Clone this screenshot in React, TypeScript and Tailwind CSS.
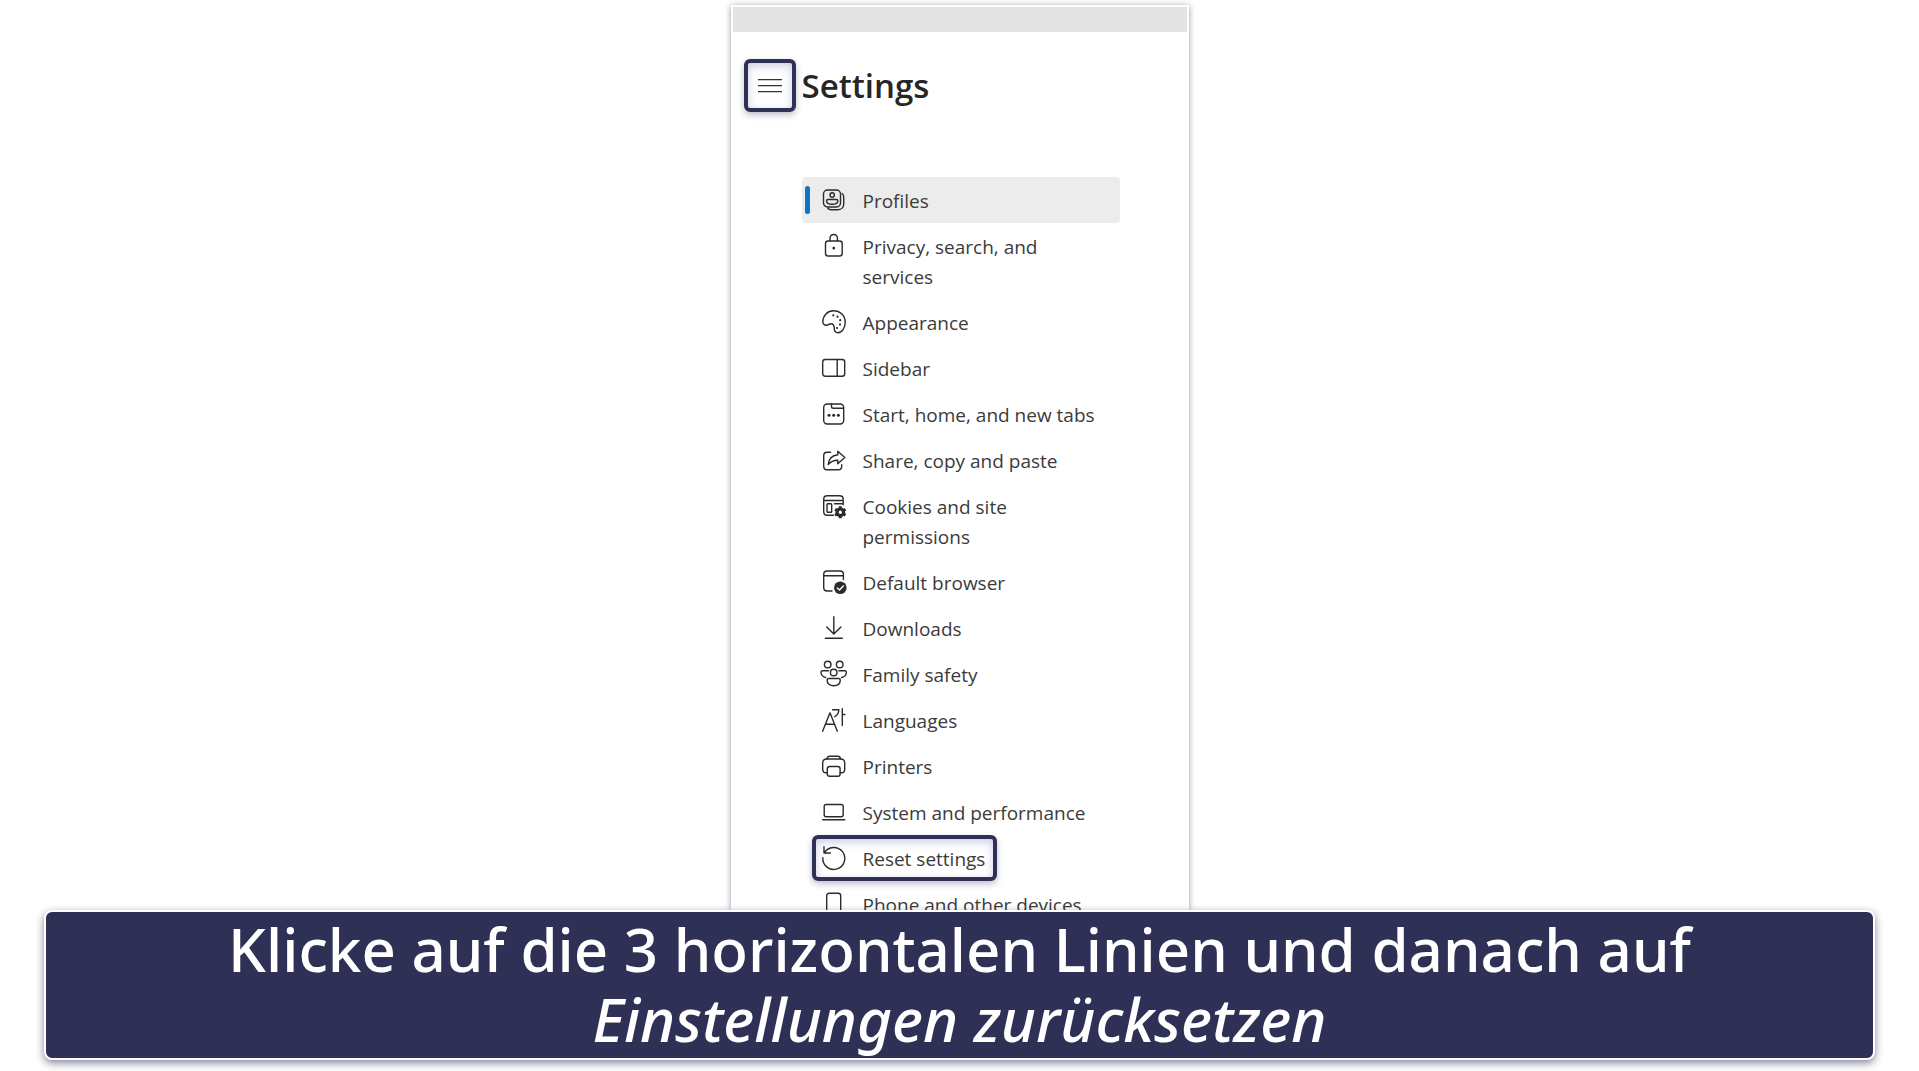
import React from 'react';

const ICONS = {
  profiles: (
    <>
      <rect x="1.5" y="2" width="17" height="17" rx="4" />
      <path d="M20.2 5.5c1 .8 1.5 1.8 1.5 3.2v7.3c0 3.3-2.4 5.7-5.7 5.7H9c-1.4 0-2.4-.5-3.2-1.5" />
      <circle cx="10.2" cy="7" r="2.2" />
      <path d="M5.8 11.5h8.8c.8 0 1.2.5 1.2 1.2 0 2.2-2.2 3.6-5.6 3.6s-5.6-1.4-5.6-3.6c0-.7.4-1.2 1.2-1.2z" />
    </>
  ),
  lock: (
    <>
      <rect x="3.5" y="7" width="16.7" height="15" rx="2.5" />
      <path d="M8 7V4.2a3.7 3.7 0 0 1 7.4 0V7" />
      <circle cx="11.8" cy="14.2" r=".7" fill="currentColor" />
    </>
  ),
  palette: (
    <>
      <path d="M.8 11.5C1 5.5 5.5.8 11.5.8c6.6 0 11.7 5 11.7 11.2 0 6-3.2 10.7-7.2 10.7-2.4 0-3.7-1.6-3.7-4.2 0-2.8-.8-4.8-3.3-4.8-1.800 0-2.5 1.5-4.5 1.5C2.2 15.2.7 13.8.8 11.5z" />
      <g fill="currentColor" stroke="none">
        <circle cx="11.3" cy="5.3" r="1.1" />
        <circle cx="15.5" cy="6.7" r="1.1" />
        <circle cx="18.2" cy="10.2" r="1.1" />
        <circle cx="18" cy="14.6" r="1.1" />
        <circle cx="15" cy="18" r="1.1" />
      </g>
    </>
  ),
  sidebar: (
    <>
      <rect x=".7" y="3.5" width="22" height="16.7" rx="2.5" />
      <path d="M15.2 3.5v16.7" />
    </>
  ),
  tabs: (
    <>
      <rect x="1.7" y="2" width="20" height="20" rx="3.5" />
      <path d="M9.5 2v2.5c0 1 .8 1.8 1.8 1.8h10" />
      <g fill="currentColor" stroke="none">
        <circle cx="7" cy="13.3" r="1.5" />
        <circle cx="11.7" cy="13.3" r="1.5" />
        <circle cx="16.4" cy="13.3" r="1.5" />
      </g>
    </>
  ),
  share: (
    <>
      <path d="M8.5 4.3H5.2c-2 0-3.5 1.5-3.5 3.5v10.5c0 2 1.5 3.5 3.5 3.5h11c2 0 3.5-1.5 3.5-3.5v-1.5" />
      <path d="M15.8 3.3l7 6.3-7 6.2v-3.5c-4.2-.2-6.8 1.2-9.6 4.3.5-5.5 3.6-9.2 9.6-9.800z" />
    </>
  ),
  cookies: (
    <>
      <path d="M11.5 21.2H5.2c-2 0-3.5-1.5-3.5-3.5V5.2c0-2 1.5-3.5 3.5-3.5h12.5c2 0 3.5 1.5 3.5 3.5v5.6M1.7 6.5h19.5" />
      <rect x="5" y="9.8" width="4.7" height="8.4" rx=".8" />
      <path d="M12.5 9.8h8" />
      <circle cx="18.3" cy="18.3" r="3.3" strokeWidth="3.2" />
      <path d="M18.3 12.3v2M18.3 22.3v2M13.1 15.3l1.7 1M21.8 20.3l1.7 1M13.1 21.3l1.7-1M21.8 16.3l1.7-1" strokeWidth="3" strokeLinecap="butt" />
    </>
  ),
  browser: (
    <>
      <path d="M10 21H5.2c-2 0-3.5-1.5-3.5-3.5v-13c0-2 1.5-3.5 3.5-3.5h12.7c2 0 3.5 1.5 3.5 3.5v5M1.7 5.8h19.7" />
      <circle cx="18.3" cy="17.7" r="6.3" fill="currentColor" stroke="none" />
      <path d="M15.3 18l2.2 2 3.8-4" stroke="#fff" />
    </>
  ),
  download: <path d="M11.8.7v17M4.7 11l7.1 7 7.1-7M3.3 22.3h17" />,
  family: (
    <>
      <circle cx="5.7" cy="2.5" r="3.3" />
      <circle cx="17.7" cy="2.5" r="3.3" />
      <circle cx="11.7" cy="10.5" r="3.3" />
      <path d="M6.5 8.8H.7c-1 0-1.7.6-1.7 1.5 0 2.7 1.8 4.6 4.7 5.2M16.9 8.8h5.8c1 0 1.7.6 1.7 1.5 0 2.7-1.8 4.6-4.7 5.2" />
      <path d="M6.8 16.5h9.8c1 0 1.7.6 1.7 1.5 0 3.5-2.6 5.8-6.6 5.8S5.1 21.5 5.1 18c0-.9.7-1.5 1.7-1.5z" />
    </>
  ),
  languages: (
    <>
      <path d="M.6 23.3L8 4.8l7.3 18.5M3.5 16.3h9" />
      <path d="M10.5 1.7h6.3c0 3.2-1.3 5.3-4 7M20.3.6v17M20.3 6.5h2.6" />
    </>
  ),
  printer: (
    <>
      <path d="M5.3 18.8H4c-2 0-3.3-1.3-3.3-3.3V9c0-2.4 1.6-4 4-4h14c2.4 0 4 1.6 4 4v6.5c0 2-1.3 3.3-3.3 3.3h-1.3" />
      <path d="M5 5c0-1.6 1-2.7 2.7-2.7h8c1.7 0 2.7 1.1 2.7 2.7" />
      <rect x="5.3" y="12.5" width="12.8" height="9.7" rx="2.2" />
    </>
  ),
  system: (
    <>
      <rect x="2.2" y="4.5" width="19" height="12.3" rx="2" />
      <path d="M.7 19.8h22" />
    </>
  ),
  reset: <path d="M2 .8v6.2h6.4M2.4 6.7A11 11 0 1 1 .8 11.8" />,
  phone: <rect x="4.7" y="1.3" width="14" height="22" rx="2.5" />,
};

type IconName = keyof typeof ICONS;

const ITEMS: { icon: IconName; label: string; active?: boolean; marked?: boolean }[] = [
  { icon: 'profiles', label: 'Profiles', active: true },
  { icon: 'lock', label: 'Privacy, search, and services' },
  { icon: 'palette', label: 'Appearance' },
  { icon: 'sidebar', label: 'Sidebar' },
  { icon: 'tabs', label: 'Start, home, and new tabs' },
  { icon: 'share', label: 'Share, copy and paste' },
  { icon: 'cookies', label: 'Cookies and site permissions' },
  { icon: 'browser', label: 'Default browser' },
  { icon: 'download', label: 'Downloads' },
  { icon: 'family', label: 'Family safety' },
  { icon: 'languages', label: 'Languages' },
  { icon: 'printer', label: 'Printers' },
  { icon: 'system', label: 'System and performance' },
  { icon: 'reset', label: 'Reset settings', marked: true },
  { icon: 'phone', label: 'Phone and other devices' },
];

function Icon({ name }: { name: IconName }) {
  return (
    <svg
      viewBox="0 0 24 24"
      className="w-6 h-6 mt-[2px] shrink-0 overflow-visible text-[#2b2b2b]"
      fill="none"
      stroke="currentColor"
      strokeWidth="1.4"
      strokeLinecap="round"
      strokeLinejoin="round"
      aria-hidden="true"
    >
      {ICONS[name]}
    </svg>
  );
}

function SettingsPanel() {
  return (
    <section className="w-[458px] flex-1 min-h-0 overflow-hidden bg-white border-2 border-b-0 border-white shadow-[0_1px_6px_rgba(47,48,86,0.5)]">
      <div className="h-[25px] bg-[#e4e4e4]" />

      <header className="flex items-center gap-[6px] pl-[11px] pt-[27px]">
        <button
          type="button"
          aria-label="Menu"
          className="w-[52px] h-[53px] flex items-center justify-center rounded-md border-4 border-[#2f3056] shadow-[0_3px_6px_rgba(47,48,86,0.3),inset_0_3px_8px_rgba(90,80,160,0.3)]"
        >
          <svg viewBox="0 0 24 14" className="w-6 h-[14px]" stroke="#333" strokeWidth="1.3" aria-hidden="true">
            <path d="M0 .7h24M0 6.7h24M0 12.7h24" />
          </svg>
        </button>
        <h1 className="text-[33px] leading-[40px] font-semibold text-[#262626]">Settings</h1>
      </header>

      <nav className="mt-[65px] ml-[69px] w-[318px]">
        <ul>
          {ITEMS.map(item => (
            <li key={item.label}>
              <a
                href="#"
                className={`relative flex items-start gap-[17px] pl-5 pr-5 pt-[9px] pb-[7px] rounded-sm ${item.active ? 'bg-[#ececec]' : ''}`}
              >
                {item.active && <span className="absolute left-[3px] top-[9px] w-[5px] h-7 rounded-full bg-[#0f73c4]" />}
                {item.marked && (
                  <span className="absolute left-[10px] top-0 w-[185px] h-[46px] rounded-md border-4 border-[#2f3056] shadow-[0_3px_6px_rgba(47,48,86,0.3),inset_0_3px_8px_rgba(90,80,160,0.3)]" />
                )}
                <Icon name={item.icon} />
                <span className="text-[19px] leading-[30px] text-[#3b3b3b]">{item.label}</span>
              </a>
            </li>
          ))}
        </ul>
      </nav>
    </section>
  );
}

export default function App() {
  return (
    <main className="h-screen flex flex-col items-center overflow-hidden bg-white pt-[5px] pb-[11px] font-['Open_Sans','Noto_Sans',sans-serif]">
      <SettingsPanel />

      {/* Step caption */}
      <div className="relative z-10 self-stretch mx-11 pt-[2px] pb-1 rounded-lg border-2 border-white bg-[#2f3056] text-center text-white shadow-[0_3px_8px_rgba(47,48,86,0.6)] font-['Noto_Sans',sans-serif]">
        <p className="text-[60px] leading-[70px] font-medium">
          Klicke auf die 3 horizontalen Linien und danach auf
          <br />
          <em>Einstellungen zurücksetzen</em>
        </p>
      </div>
    </main>
  );
}
